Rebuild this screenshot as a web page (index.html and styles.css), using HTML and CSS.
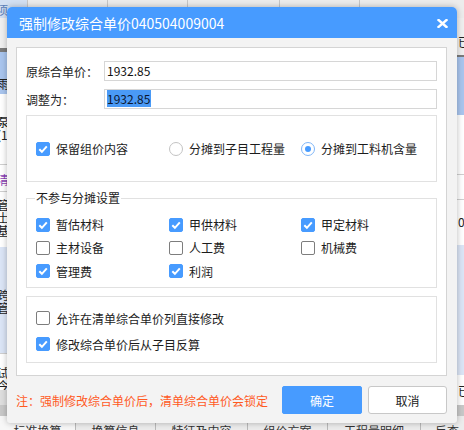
FILE: index.html
```html
<!DOCTYPE html>
<html lang="zh-CN">
<head>
<meta charset="utf-8">
<title>强制修改综合单价</title>
<link rel="stylesheet" href="styles.css">
</head>
<body>
<div class="app">
  <div class="hdr">
    <div class="hc hc1"><span class="hc1t">项</span></div>
    <div class="hc hc2"></div>
    <div class="hc hc3"></div>
    <div class="hc hc4"></div>
    <div class="hc hc5"></div>
    <div class="hc hc6"></div>
  </div>
  <div class="panes">
    <div class="pane">
      <div class="band l-a"></div>
      <div class="band line l-b"></div>
      <div class="band blue l-c"><span class="lt">雨</span></div>
      <div class="band l-d"><span class="lt">泵</span><span class="lt">(1</span></div>
      <div class="band l-e"><span class="lt purple">清</span></div>
      <div class="band l-f"><span class="lt">管</span><span class="lt">土</span><span class="lt">基</span></div>
      <div class="band lblue l-g"><span class="lt">跨</span><span class="lt">管</span></div>
      <div class="band l-h"><span class="lt">试</span><span class="lt">今</span></div>
      <div class="band l-i"></div>
      <div class="band l-j"></div>
    </div>
    <div class="pane">
      <div class="band r-a"><span class="rt">已</span></div>
      <div class="band line r-b"></div>
      <div class="band blue r-c"></div>
      <div class="band r-d"></div>
      <div class="band r-e"></div>
      <div class="band r-f"><span class="rt">0</span></div>
      <div class="band lblue r-g"></div>
      <div class="band r-h"><span class="rt">已</span></div>
      <div class="band r-i"></div>
    </div>
  </div>
  <div class="tabs">
    <div class="tab t1">标准换算</div>
    <div class="tab t2">换算信息</div>
    <div class="tab t3">特征及内容</div>
    <div class="tab t4">组价方案</div>
    <div class="tab t5">工程量明细</div>
    <div class="tab t6">反查图元</div>
  </div>
</div>

<div class="dlg">
  <div class="dlg-title">
    <span class="dlg-caption">强制修改综合单价040504009004</span>
    <svg class="close" width="11" height="9" viewBox="0 0 11 9"><path d="M1.5 1 L9.5 8 M9.5 1 L1.5 8" stroke="#fff" stroke-width="2.4" stroke-linecap="square"/></svg>
  </div>
  <div class="dlg-body">
    <div class="panel">
      <div class="field">
        <span class="flabel">原综合单价：</span>
        <div class="inp">1932.85</div>
      </div>
      <div class="field f2">
        <span class="flabel">调整为：</span>
        <div class="inp"><span class="sel">1932.85</span></div>
      </div>

      <div class="box box1">
        <div class="opt"><span class="cb on"><svg width="14" height="14" viewBox="0 0 14 14"><path d="M3.3 7.2 L5.9 9.8 L10.8 4.4" fill="none" stroke="#fff" stroke-width="2"/></svg></span>保留组价内容</div>
        <div class="opt"><span class="rd"></span>分摊到子目工程量</div>
        <div class="opt"><span class="rd on"></span>分摊到工料机含量</div>
      </div>

      <fieldset class="box box2">
        <legend>不参与分摊设置</legend>
        <div class="grid">
          <div class="opt"><span class="cb on"><svg width="14" height="14" viewBox="0 0 14 14"><path d="M3.3 7.2 L5.9 9.8 L10.8 4.4" fill="none" stroke="#fff" stroke-width="2"/></svg></span>暂估材料</div>
          <div class="opt"><span class="cb on"><svg width="14" height="14" viewBox="0 0 14 14"><path d="M3.3 7.2 L5.9 9.8 L10.8 4.4" fill="none" stroke="#fff" stroke-width="2"/></svg></span>甲供材料</div>
          <div class="opt"><span class="cb on"><svg width="14" height="14" viewBox="0 0 14 14"><path d="M3.3 7.2 L5.9 9.8 L10.8 4.4" fill="none" stroke="#fff" stroke-width="2"/></svg></span>甲定材料</div>
          <div class="opt"><span class="cb"></span>主材设备</div>
          <div class="opt"><span class="cb"></span>人工费</div>
          <div class="opt"><span class="cb"></span>机械费</div>
          <div class="opt"><span class="cb on"><svg width="14" height="14" viewBox="0 0 14 14"><path d="M3.3 7.2 L5.9 9.8 L10.8 4.4" fill="none" stroke="#fff" stroke-width="2"/></svg></span>管理费</div>
          <div class="opt"><span class="cb on"><svg width="14" height="14" viewBox="0 0 14 14"><path d="M3.3 7.2 L5.9 9.8 L10.8 4.4" fill="none" stroke="#fff" stroke-width="2"/></svg></span>利润</div>
        </div>
      </fieldset>

      <div class="box box3">
        <div class="opt row"><span class="cb"></span>允许在清单综合单价列直接修改</div>
        <div class="opt row"><span class="cb on"><svg width="14" height="14" viewBox="0 0 14 14"><path d="M3.3 7.2 L5.9 9.8 L10.8 4.4" fill="none" stroke="#fff" stroke-width="2"/></svg></span>修改综合单价后从子目反算</div>
      </div>
    </div>

    <div class="foot">
      <span class="note">注：强制修改综合单价后，清单综合单价会锁定</span>
      <button class="btn ok">确定</button>
      <button class="btn cancel">取消</button>
    </div>
  </div>
</div>
</body>
</html>
```

FILE: styles.css
```css
* { box-sizing: border-box; }
html, body { margin: 0; padding: 0; }
body {
  width: 464px;
  height: 430px;
  overflow: hidden;
  position: relative;
  background: #fff;
  font-family: "Noto Sans CJK SC", "Noto Sans", sans-serif;
  font-size: 12px;
  color: #1c1c1c;
}

/* ---------- background application ---------- */
.app { display: flex; flex-direction: column; height: 430px; overflow: hidden; }
.hdr { display: flex; height: 18px; flex: none; background: #ececec; }
.hc { height: 100%; border-right: 1px solid #c6c6c6; flex: none; }
.hc1 { width: 28px; background: #d3e0f2; overflow: hidden; }
.hc1t { display: block; margin: 3px 0 0 -4px; font-size: 12px; line-height: 14px; color: #5b7fb8; }
.hc2 { width: 80px; }
.hc3 { width: 80px; }
.hc4 { width: 92px; }
.hc5 { width: 80px; }
.hc6 { flex: 1; border-right: 0; }

.panes { display: flex; height: 398px; flex: none; }
.pane { width: 232px; display: flex; flex-direction: column; overflow: hidden; }
.band { flex: none; background: #fff; overflow: hidden; display: flex; flex-direction: column; }
.line { background: #7b7b7b; }
.blue { background: #a9c5ee; }
.lblue { background: #dbe5f6; }

.lt { display: block; margin-left: -3px; font-size: 12px; line-height: 13px; color: #222; }
.purple { color: #8a3fb5; }
.rt { display: block; padding-left: 226px; font-size: 12px; line-height: 13px; color: #222; }

.l-a { height: 30px; background: #f0f0f0; }
.l-b { height: 4px; }
.l-c { height: 42px; padding-top: 25px; }
.l-d { height: 71px; padding-top: 21px; border-bottom: 1px solid #cfcfcf; }
.l-e { height: 27px; padding-top: 8px; border-bottom: 1px solid #cfcfcf; }
.l-f { height: 55px; padding-top: 6px; }
.l-g { height: 106px; padding-top: 41px; }
.l-h { height: 37px; padding-top: 12px; border-top: 1px solid #cfcfcf; }
.l-i { height: 15px; background: #dedede; }
.l-j { height: 11px; background: #c8c8c8; }

.r-a { height: 37px; background: #efefef; padding-top: 17px; }
.r-b { height: 2px; }
.r-c { height: 58px; }
.r-d { height: 60px; border-bottom: 1px solid #cfcfcf; }
.r-e { height: 25px; border-bottom: 1px solid #cfcfcf; }
.r-f { height: 45px; padding-top: 15px; }
.r-g { height: 130px; }
.r-h { height: 30px; padding-top: 9px; }
.r-i { height: 11px; background: #c8c8c8; }

.tabs { display: flex; height: 14px; flex: none; background: #ececec; overflow: hidden; }
.tab { height: 30px; padding-top: 8px; line-height: 14px; text-align: center; font-size: 12px; color: #333; border-right: 1px solid #b9b9b9; flex: none; }
.t1 { width: 76px; background: #f7f7f7; }
.t2 { width: 80px; }
.t3 { width: 92px; }
.t4 { width: 80px; }
.t5 { width: 93px; }
.t6 { flex: 1; border-right: 0; text-align: left; padding-left: 14px; }

/* ---------- dialog ---------- */
.dlg {
  position: absolute;
  left: 7px;
  top: 7px;
  width: 450px;
  height: 416px;
  background: #f3f3f3;
  border-radius: 5px 5px 3px 3px;
  box-shadow: 0 0 6px rgba(0, 0, 0, 0.28);
  display: flex;
  flex-direction: column;
  overflow: hidden;
}
.dlg-title {
  height: 31px;
  flex: none;
  background: #479bff;
  color: #fff;
  font-size: 14px;
  display: flex;
  align-items: center;
  justify-content: space-between;
  padding: 1px 9px 0 12px;
}
.dlg-caption { line-height: 20px; }
.close { display: block; }

.dlg-body { flex: 1; padding: 9px 10px 9px 9px; display: flex; flex-direction: column; }

.panel {
  height: 329px;
  flex: none;
  background: #fff;
  border: 1px solid #d4d4d4;
  padding: 13px 9px 0 9px;
  display: flex;
  flex-direction: column;
}

.field { display: flex; align-items: center; height: 20px; flex: none; }
.f2 { margin-top: 8px; }
.flabel { width: 78px; flex: none; color: #222; font-size: 12px; }
.inp {
  width: 335px;
  height: 20px;
  border: 1px solid #d6d6d6;
  background: #fff;
  padding-left: 2px;
  font-size: 12px;
  line-height: 18px;
  color: #111;
}
.sel {
  display: inline-block;
  height: 17px;
  line-height: 17px;
  background: #4a9af6;
  color: #0b1731;
  padding: 0 1px 0 0;
}

.box { border: 1px solid #e1e1e1; flex: none; }
.box1 {
  margin-top: 6px;
  height: 67px;
  padding-left: 9px;
  display: grid;
  grid-template-columns: 133px 132px 1fr;
  align-items: center;
}
.box2 {
  margin: 9px 0 0 0;
  padding: 8px 0 4px 9px;
  min-width: 0;
  height: 97px;
}
.box2 legend {
  padding: 0 1px;
  margin-left: -1px;
  font-size: 12px;
  line-height: 14px;
  color: #1c1c1c;
}
.grid {
  display: grid;
  grid-template-columns: 133px 132px 1fr;
  grid-auto-rows: 23.33px;
  align-items: center;
}
.box3 {
  margin-top: 8px;
  height: 67px;
  padding: 8px 0 0 9px;
}
.row { height: 26px; }

.opt { display: flex; align-items: center; gap: 6px; font-size: 12px; color: #1c1c1c; white-space: nowrap; }

.cb {
  width: 14px;
  height: 14px;
  flex: none;
  border: 1px solid #7d7d7d;
  border-radius: 2px;
  background: #fff;
  position: relative;
}
.cb.on { background: #479bff; border-color: #479bff; }
.cb svg { position: absolute; left: -1px; top: -1px; }

.rd {
  width: 14px;
  height: 14px;
  flex: none;
  border: 1px solid #c3c3c3;
  border-radius: 50%;
  background: #fff;
  display: flex;
  align-items: center;
  justify-content: center;
}
.rd.on { border-color: #7fb6f8; }
.rd.on::after {
  content: "";
  width: 6px;
  height: 6px;
  border-radius: 50%;
  background: #479bff;
}

.foot { display: flex; align-items: center; margin-top: 10px; height: 28px; flex: none; }
.note { flex: 1; color: #ff5a1f; font-size: 12px; }
.btn {
  font-family: inherit;
  font-size: 12px;
  height: 28px;
  width: 80px;
  border-radius: 2px;
  cursor: pointer;
  padding: 0;
}
.ok { background: #479bff; border: 1px solid #479bff; color: #fff; }
.cancel { margin-left: 6px; width: 79px; background: #fff; border: 1px solid #c8c8c8; color: #222; border-radius: 3px; }
```
